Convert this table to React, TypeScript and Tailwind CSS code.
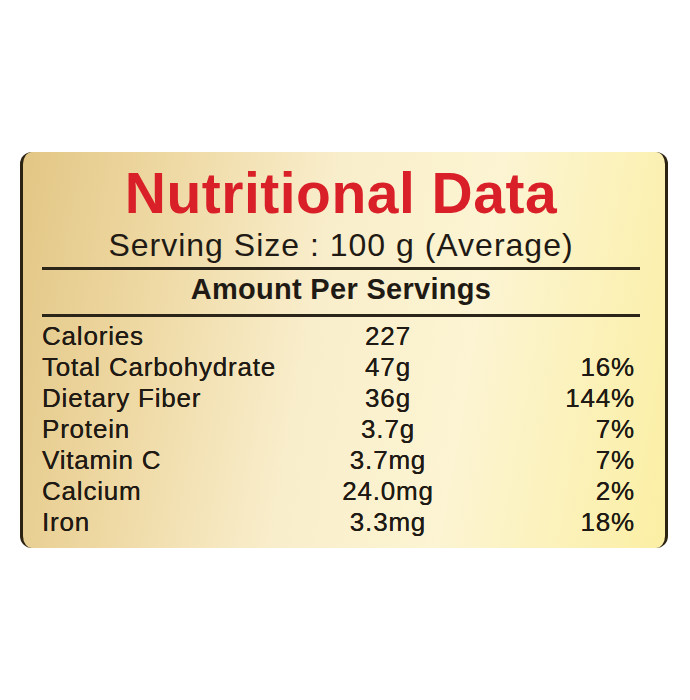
import React from "react";

const rows = [
  { name: "Calories", amount: "227", daily: "" },
  { name: "Total Carbohydrate", amount: "47g", daily: "16%" },
  { name: "Dietary Fiber", amount: "36g", daily: "144%" },
  { name: "Protein", amount: "3.7g", daily: "7%" },
  { name: "Vitamin C", amount: "3.7mg", daily: "7%" },
  { name: "Calcium", amount: "24.0mg", daily: "2%" },
  { name: "Iron", amount: "3.3mg", daily: "18%" },
];

export default function App() {
  return (
    <div className="w-[690px] h-[700px] bg-white pt-[152px] pl-[20px] font-['Liberation_Sans',Arial,sans-serif]">
      <div className="w-[648px] h-[396px] rounded-[12px] border-x-[3px] border-[#2b2212] bg-[linear-gradient(100deg,#e2c685_0%,#eed8a2_20%,#f9eecc_45%,#fcf4d2_68%,#fbefa4_100%)] pl-[19px] pr-[25px] pt-[13px] text-[#1f1a14]">
        <h1 className="text-center text-[57px] leading-[57px] font-bold tracking-[0.5px] text-[#d91f27]">
          Nutritional Data
        </h1>
        <p className="mt-[7px] text-center text-[32px] leading-[32px] tracking-[1px]">
          Serving Size : 100 g (Average)
        </p>
        <div className="mt-[6px] h-[3px] bg-[#2b2418]" />
        <h2 className="mt-[5px] text-center text-[29px] leading-[29px] font-bold tracking-[0.3px]">
          Amount Per Servings
        </h2>
        <div className="mt-[10px] h-[3px] bg-[#2b2418]" />
        <div className="mt-[4px] flex flex-col text-[26px] leading-[31px] tracking-[0.8px] [text-shadow:0_0_0.4px_#1f1a14]">
          {rows.map((r) => (
            <div key={r.name} className="flex">
              <span className="w-[296px]">{r.name}</span>
              <span className="w-[100px] text-center">{r.amount}</span>
              <span className="flex-1 pr-[5px] text-right">{r.daily}</span>
            </div>
          ))}
        </div>
      </div>
    </div>
  );
}
